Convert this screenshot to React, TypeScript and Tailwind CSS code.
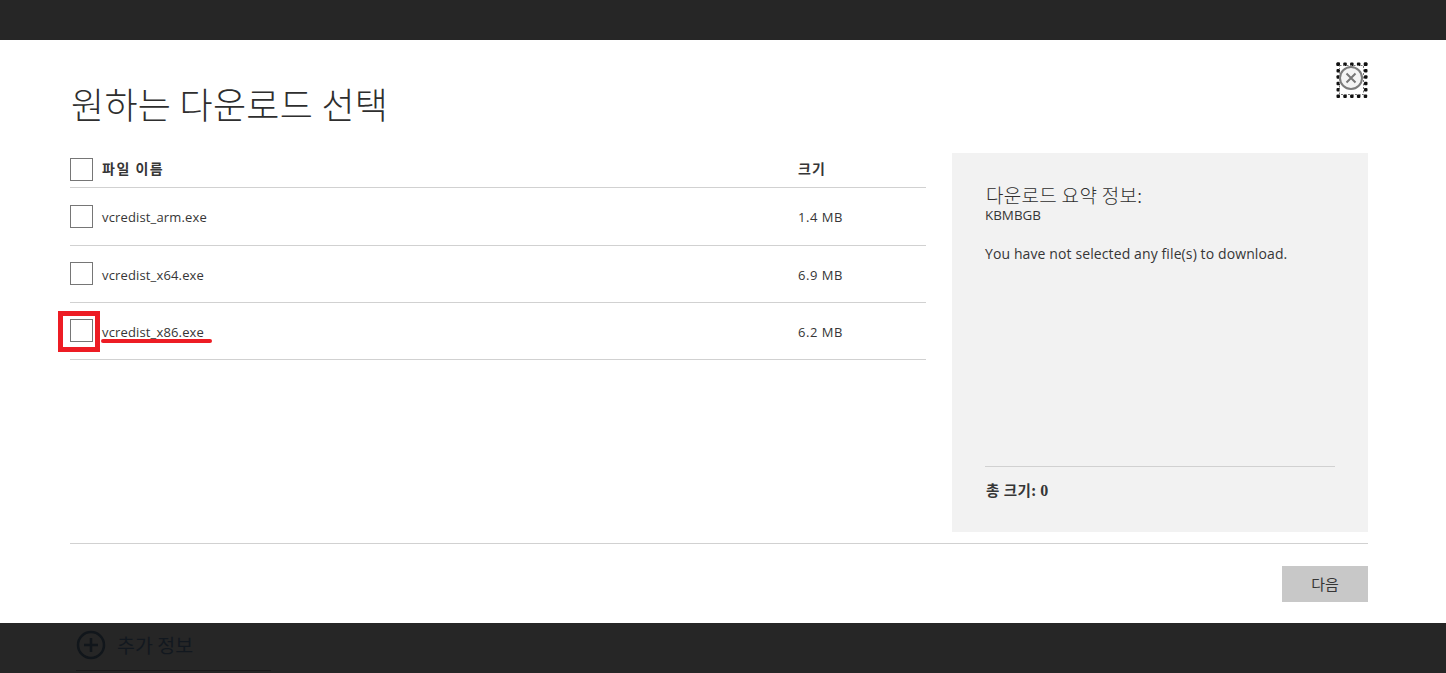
import React from 'react'

const files = [
  { name: 'vcredist_arm.exe', size: '1.4 MB', row: 'h-[58px]', text: 'pt-[2px]' },
  { name: 'vcredist_x64.exe', size: '6.9 MB', row: 'h-[57px] pb-px', text: 'pt-[4px]' },
  { name: 'vcredist_x86.exe', size: '6.2 MB', row: 'h-[57px] pb-px', text: 'pt-[4px]' },
]

const dots = [0, 1, 2, 3, 4]

const Check = () => <span className="block w-[23px] h-[23px] border border-[#767676] bg-white shrink-0" />

const App = () => {
  return (
    <div className="w-[1446px] h-[673px] overflow-hidden flex flex-col bg-white text-[#363636] font-['Open_Sans','Noto_Sans_CJK_KR',sans-serif]">
      <div className="h-10 bg-[#262626] shrink-0" />

      <div className="h-[583px] shrink-0 pl-[70px] pr-[78px] flex flex-col relative">
        {/* Title */}
        <div className="h-[113px] shrink-0 flex items-start justify-between">
          <h1 className="mt-[36px] ml-px text-[36px] leading-[54px] tracking-[0.3px] text-[#2e2e2e] font-['Noto_Sans_CJK_KR',sans-serif] font-light">원하는 다운로드 선택</h1>
          <button className="mt-[22px] w-8 h-9">
            <svg width="32" height="36" viewBox="0 0 32 36" fill="none">
              {dots.map((i) => (
                <g key={i} fill="#111">
                  <rect x={0.5 + i * 6.8} y="0.5" width="3.5" height="3.5" rx="1" />
                  <rect x={0.5 + i * 6.8} y="32.5" width="3.5" height="3.5" rx="1" />
                  <rect x="0.5" y={0.5 + i * 6.4} width="3.5" height="3.5" rx="1" />
                  <rect x="28" y={0.5 + i * 6.4} width="3.5" height="3.5" rx="1" />
                </g>
              ))}
              <rect x="3.5" y="3.5" width="24" height="29" stroke="#777" strokeDasharray="2 1.5" />
              <circle cx="15" cy="16" r="11" stroke="#7d7d7d" strokeWidth="2" fill="#f4f4f4" />
              <path d="M10.5 11.5l9 9M19.5 11.5l-9 9" stroke="#777" strokeWidth="2" />
            </svg>
          </button>
        </div>

        <div className="flex h-[379px] shrink-0 justify-between">
          {/* File table */}
          <div className="w-[856px]">
            <div className="h-[35px] pb-[2px] flex items-center border-b border-[#d1d1d1]">
              <Check />
              <span className="ml-[9px] w-[696px] pb-px text-[14px] font-bold font-['Noto_Sans_CJK_KR',sans-serif] tracking-[1.5px]">파일 이름</span>
              <span className="pb-px text-[14px] font-bold font-['Noto_Sans_CJK_KR',sans-serif] tracking-[1px]">크기</span>
            </div>
            {files.map((file) => (
              <div key={file.name} className={`${file.row} flex items-center border-b border-[#d1d1d1]`}>
                <Check />
                <span className={`${file.text} ml-[9px] w-[696px] text-[13px] tracking-[0.15px]`}>{file.name}</span>
                <span className={`${file.text} text-[13px] tracking-[0.55px]`}>{file.size}</span>
              </div>
            ))}
          </div>

          {/* Summary */}
          <div className="w-[416px] bg-[#f2f2f2] pt-[30px] px-[33px] flex flex-col">
            <div className="ml-px text-[19px] leading-[24px] tracking-[0.3px] text-[#2e2e2e] font-['Noto_Sans_CJK_KR',sans-serif] font-light">다운로드 요약 정보:</div>
            <div className="text-[13.4px] leading-[16px]">KBMBGB</div>
            <p className="mt-[21px] text-[14px] leading-5 tracking-[0.11px]">You have not selected any file(s) to download.</p>
            <div className="mt-auto mb-[32px] h-[34px] border-t border-[#d1d1d1] pt-[13px] pl-px text-[14.5px] leading-5 tracking-[0.5px] font-bold font-['Noto_Sans_CJK_KR',serif]">총 크기: <span className="text-[16px] font-['Liberation_Serif',serif]">0</span></div>
          </div>
        </div>

        <div className="mt-[11px] border-t border-[#d1d1d1] flex justify-end pt-[22px]">
          <button className="w-[86px] h-9 bg-[#c8c8c8] text-[15px] font-['Noto_Sans_CJK_KR',sans-serif]">다음</button>
        </div>

        {/* Red annotations */}
        <span className="absolute left-[58px] top-[271px] w-[42px] h-[41px] border-[5px] border-[#ed1c24]" />
        <span className="absolute left-[101px] top-[299px] w-[111px] h-1 rounded-full bg-[#ed1c24]" />
      </div>

      <div className="flex-1 bg-[#262626] pl-[76px] pt-[7px] relative">
        <div className="flex items-center gap-[11px] text-[#12181f]">
          <svg width="30" height="30" viewBox="0 0 30 30" fill="none" stroke="#11161b" strokeWidth="2.5">
            <circle cx="15" cy="15" r="13" />
            <path d="M15 8v14M8 15h14" />
          </svg>
          <span className="text-[19.5px] leading-[28px] font-['Noto_Sans_CJK_KR',sans-serif]">추가 정보</span>
        </div>
        <div className="absolute left-[76px] top-[47px] w-[195px] h-px bg-[#1a1a1a]" />
      </div>
    </div>
  )
}

export default App
